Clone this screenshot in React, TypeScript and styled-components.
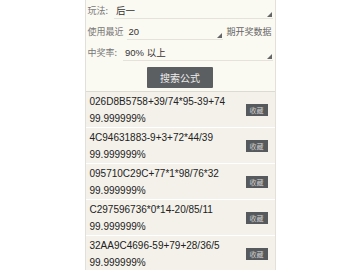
import React from "react"
import styled, { createGlobalStyle } from "styled-components"

const GlobalStyle = createGlobalStyle`
  html, body {
    margin: 0;
    padding: 0;
    background: #fff;
  }
  body {
    font-family: "Liberation Sans", Arial, "Noto Sans CJK SC", sans-serif;
    color: #333;
  }
`

const Page = styled.div`
  width: 191px;
  margin: 0 auto;
  border-left: 1px solid #e2e0d8;
  border-right: 1px solid #e2e0d8;
  box-sizing: border-box;
`

const Form = styled.div`
  background: #fbfaf2;
  padding: 0 2px 3px 2px;
  border-bottom: 1px solid #dcdad2;
`

const Row = styled.div`
  display: flex;
  align-items: center;
  height: 21px;
`

const Label = styled.span`
  font-family: "Noto Sans CJK SC", sans-serif;
  font-size: 9px;
  color: #777;
  white-space: nowrap;
  margin-right: ${p => p.gap || 6}px;
`

const Field = styled.div`
  position: relative;
  flex: ${p => (p.width ? "none" : "1")};
  width: ${p => (p.width ? p.width + "px" : "auto")};
  height: 15px;
  display: flex;
  align-items: center;
  border-bottom: 1px solid #e4e2da;
  font-family: "Liberation Sans", "Noto Sans CJK SC", sans-serif;
  font-size: 9.5px;
  color: #333;
  padding-left: 2px;

  &:after {
    content: '';
    position: absolute;
    right: 1px;
    bottom: 1px;
    width: 0;
    height: 0;
    border-left: 5px solid transparent;
    border-bottom: 5px solid #666;
  }
`

const Suffix = styled.span`
  font-family: "Noto Sans CJK SC", sans-serif;
  font-size: 9px;
  color: #666;
  margin-left: 4px;
  white-space: nowrap;
`

const ButtonRow = styled.div`
  display: flex;
  justify-content: center;
  padding-top: 4px;
`

const SearchButton = styled.button`
  width: 66px;
  height: 21px;
  border: none;
  border-radius: 1px;
  background: #5b5f61;
  color: #eee;
  font-family: "Noto Sans CJK SC", sans-serif;
  font-size: 10px;
  padding: 0;
`

const List = styled.div`
  background: #f3f1ea;
`

const Item = styled.div`
  display: flex;
  align-items: center;
  padding: 2px 7px 0 4px;
  border-bottom: 1px solid #fff;
`

const ItemText = styled.div`
  flex: 1;
  font-size: 10px;
  line-height: 16.5px;
  color: #222;
`

const SaveButton = styled.button`
  width: 22px;
  height: 12px;
  border: none;
  background: #575a5c;
  color: #ccc;
  font-family: "Noto Sans CJK SC", sans-serif;
  font-size: 7px;
  padding: 0;
  margin-top: -2px;
`

const formulas = [
  "026D8B5758+39/74*95-39+74",
  "4C94631883-9+3+72*44/39",
  "095710C29C+77*1*98/76*32",
  "C297596736*0*14-20/85/11",
  "32AA9C4696-59+79+28/36/5",
]

export default function App() {
  return (
    <>
      <GlobalStyle />
      <Page>
        <Form>
          <Row>
            <Label>玩法:</Label>
            <Field>后一</Field>
          </Row>
          <Row>
            <Label gap={3}>使用最近</Label>
            <Field width={94}>20</Field>
            <Suffix>期开奖数据</Suffix>
          </Row>
          <Row>
            <Label>中奖率:</Label>
            <Field>90% 以上</Field>
          </Row>
          <ButtonRow>
            <SearchButton>搜索公式</SearchButton>
          </ButtonRow>
        </Form>
        <List>
          {formulas.map(f => (
            <Item key={f}>
              <ItemText>
                <div>{f}</div>
                <div>99.999999%</div>
              </ItemText>
              <SaveButton>收藏</SaveButton>
            </Item>
          ))}
        </List>
      </Page>
    </>
  )
}
